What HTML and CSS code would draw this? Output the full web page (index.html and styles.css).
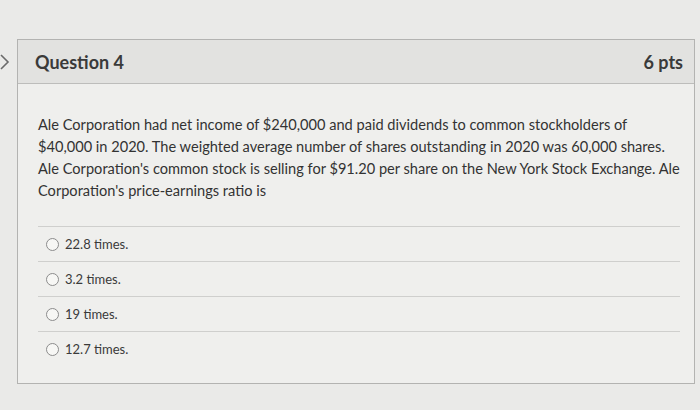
FILE: index.html
```html
<!DOCTYPE html>
<html>
<head>
<meta charset="utf-8">
<link rel="stylesheet" href="styles.css">
</head>
<body>
<div class="page">
  <div class="toggle">
    <svg width="12" height="20" viewBox="0 0 12 20"><path d="M1 3 L8 10 L1 17" fill="none" stroke="#6a6a6a" stroke-width="1.6"/></svg>
  </div>
  <div class="card">
    <div class="header">
      <span class="title">Question 4</span>
      <span class="pts">6 pts</span>
    </div>
    <div class="body">
      <p class="text">Ale Corporation had net income of $240,000 and paid dividends to common stockholders of $40,000 in 2020. The weighted average number of shares outstanding in 2020 was 60,000 shares. Ale Corporation's common stock is selling for $91.20 per share on the New York Stock Exchange. Ale Corporation's price-earnings ratio is</p>
      <div class="answers">
        <label class="answer"><span class="radio"></span>22.8 times.</label>
        <label class="answer"><span class="radio"></span>3.2 times.</label>
        <label class="answer"><span class="radio"></span>19 times.</label>
        <label class="answer"><span class="radio"></span>12.7 times.</label>
      </div>
    </div>
  </div>
</div>
</body>
</html>
```
FILE: styles.css
```css
html, body {
  margin: 0;
  padding: 0;
}
body {
  background: #eaeae8;
  font-family: Lato, "Liberation Sans", sans-serif;
  color: #333;
  width: 700px;
  height: 410px;
  overflow: hidden;
}
.page {
  display: flex;
  padding: 39px 5px 0 0;
}
.toggle {
  width: 17px;
  flex: none;
  padding-top: 13px;
}
.card {
  flex: 1;
  border: 1px solid #b3b3b1;
  background: #efefed;
  height: 343px;
}
.header {
  height: 43px;
  background: #e2e2e0;
  border-bottom: 1px solid #bdbdbb;
  display: flex;
  align-items: center;
  justify-content: space-between;
  padding: 0 11px 0 17px;
}
.title, .pts {
  font-size: 18px;
  font-weight: 700;
  color: #3a3a3a;
}
.body {
  padding: 30px 14px 0 20px;
}
.text {
  margin: 0;
  font-size: 14.6px;
  line-height: 22px;
  color: #333;
}
.answers {
  margin-top: 24px;
}
.answer {
  display: flex;
  align-items: center;
  gap: 6px;
  height: 34px;
  border-top: 1px solid #cfcfcd;
  padding-left: 8px;
  font-size: 13px;
  color: #3a3a3a;
}
.radio {
  width: 11px;
  height: 11px;
  border: 1px solid #8c8c8c;
  border-radius: 50%;
  background: #f7f7f5;
}
```
